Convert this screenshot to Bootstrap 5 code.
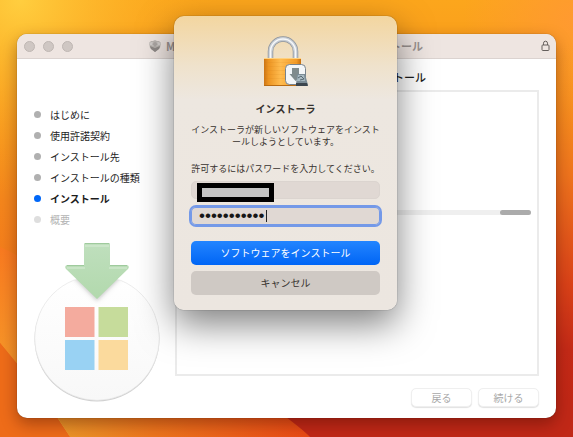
<!DOCTYPE html>
<html lang="ja">
<head>
<meta charset="utf-8">
<meta name="viewport" content="width=device-width, initial-scale=1">
<title>インストーラ</title>
<link href="https://cdn.jsdelivr.net/npm/bootstrap@5.3.0/dist/css/bootstrap.min.css" rel="stylesheet">
<style>
body{font-family:"Noto Sans CJK JP",sans-serif;font-size:10px;line-height:12px;color:#1c1c1c;background:#f5801a}
.desktop{padding:34px 17px 19px}
.installer{border-radius:10px;box-shadow:0 0 1px rgba(0,0,0,.5),0 6px 16px rgba(60,10,0,.4)}
.titlebar{height:25px;padding:0 6px 0 7px;background:#eee5e1;border-bottom:1px solid #dbd3d0;border-radius:10px 10px 0 0;color:#9a9290;font-size:11px}
.light{width:11px;height:11px;border-radius:50%;background:#cfc7c3;border:1px solid #bfb7b3}
.caption-row{margin-left:75px;margin-right:118px}
.sidebar{width:158px;padding:45px 0 15px 17px}
.steps li{height:21px;gap:9px}
.dot{width:7px;height:7px;border-radius:50%;background:#b0b0b0}
.current{font-weight:700}
.current .dot{background:#0067f8}
.pending{color:#b4b4b4}
.pending .dot{background:#dedede}
.emblem{width:128px}
.content-pane{padding:11px 17px 11px 0}
.pane-title{font-size:11px;line-height:14px;padding-right:113px;margin-bottom:6px}
.log-panel{border:2px solid #ebebeb;padding:0 6px 0 0}
.progress-line{height:5px;margin-top:118px;background:#efefef;border-radius:3px}
.progress-line .progress-bar{width:31px;background:#ababab;border-radius:3px}
.nav-row{gap:6px}
.nav-btn{width:61px;height:19px;font-size:10px;line-height:12px;border-radius:5px;padding:0;background:#fff;color:#aaa;border:1px solid #ededed;box-shadow:0 1px 1px #e2e2e2}
.nav-btn:disabled{opacity:1;background:#fff;color:#a8a8a8;border-color:#efefef}
.auth-layer{padding:16px 2px 0 0}
.auth{width:223px;padding:20px 17px 15px;border-radius:10px;color:#37322e;background:linear-gradient(#f3d6a0,#efe2cc 50px,#ede7e0 84px,#ece6e0);box-shadow:0 0 1px rgba(0,0,0,.7),0 14px 36px rgba(0,0,0,.5)}
.auth h1{font-size:10px;line-height:12px;margin:14px 0 9px;font-weight:700}
.auth p,.auth label{font-size:9px;line-height:12px;white-space:nowrap}
.auth p{margin-bottom:15px}
.auth label{margin-bottom:6px}
.entry{height:18px;border-radius:5px;background:#e0d8d3;border:1px solid #dbd4cf;padding:0 8px}
.entry input{border:0;outline:0;background:none;padding:0;font:17px/18px "Liberation Sans",sans-serif;color:#171717;min-width:0}
.entry .secret{width:67px}
.focused{margin:8px 0 16px;border:0;box-shadow:0 0 0 2px #7499e8,inset 0 0 0 1px #7499e8}
.caret{width:1px;height:12px;background:#222}
.mask{left:5px;top:1px;width:77px;height:19px;border:5px solid #000;background:#c4c4c4}
.act{height:24px;border:0;border-radius:5px;font-size:10px;line-height:12px;padding:0}
.act-main{background:linear-gradient(#2385ff,#0065f5);color:#fff;margin-bottom:6px}
.act-cancel{background:#cfc9c4;color:#37322e}
</style>
<script src="https://cdn.jsdelivr.net/npm/bootstrap@5.3.0/dist/js/bootstrap.bundle.min.js"></script>
</head>
<body>
<div class="desktop position-relative min-vh-100 d-flex">
  <svg class="position-absolute top-0 start-0 w-100 h-100" viewBox="0 0 573 437" preserveAspectRatio="none" aria-hidden="true">
    <defs>
      <linearGradient id="base" x1="0" y1="0" x2="0" y2="1"><stop offset="0" stop-color="#fca61c"/><stop offset=".45" stop-color="#f4861c"/><stop offset="1" stop-color="#f0611a"/></linearGradient>
      <radialGradient id="sun" gradientUnits="userSpaceOnUse" cx="20" cy="0" r="200"><stop offset="0" stop-color="#ffce3f"/><stop offset="1" stop-color="#fca61c" stop-opacity="0"/></radialGradient>
      <radialGradient id="glow" gradientUnits="userSpaceOnUse" cx="573" cy="20" r="110"><stop offset="0" stop-color="#ff9a30"/><stop offset="1" stop-color="#ff9a30" stop-opacity="0"/></radialGradient>
      <linearGradient id="rightside" gradientUnits="userSpaceOnUse" x1="0" y1="0" x2="0" y2="437"><stop offset=".1" stop-color="#fb9420" stop-opacity="0"/><stop offset=".4" stop-color="#ef741d"/><stop offset=".65" stop-color="#da4218"/><stop offset=".8" stop-color="#c42a17"/><stop offset="1" stop-color="#c02514"/></linearGradient>
      <linearGradient id="band" x1="0" y1="0" x2="0" y2="1"><stop offset="0" stop-color="#f97a20"/><stop offset="1" stop-color="#f4a82e"/></linearGradient>
      <linearGradient id="foot" x1="0" y1="0" x2="1" y2="0"><stop offset="0" stop-color="#ec9a2a"/><stop offset=".4" stop-color="#ee761d"/><stop offset="1" stop-color="#ea4a15"/></linearGradient>
    </defs>
    <path fill="url(#base)" d="M0 0H573V437H0Z"/>
    <path fill="url(#sun)" d="M0 0H230V210H0Z"/>
    <path fill="url(#glow)" d="M460 0H573V130H460Z"/>
    <path fill="url(#rightside)" d="M500 0H573V437H500Z"/>
    <path fill="url(#band)" d="M0 247Q40 263 90 320V437H70Q38 388 0 343Z"/>
    <path fill="#ee6c19" d="M0 343Q38 388 70 437H0Z"/>
    <path fill="url(#foot)" d="M50 405H275L310 437H70Z"/>
    <path fill="#c12817" d="M262 400H573V437H310Q297 424 262 400Z"/>
  </svg>

  <main class="installer position-relative d-flex flex-column flex-grow-1 bg-white">
    <header class="titlebar d-flex align-items-center fw-bold">
      <span class="d-flex gap-1"><i class="light"></i><i class="light ms-1 me-1"></i><i class="light"></i></span>
      <div class="caption-row d-flex align-items-center flex-grow-1">
        <svg width="14" height="14" viewBox="0 0 14 14" aria-hidden="true"><path fill="#b9b4b0" d="M1 4 3 2 5 2 7 1 9 2 11 2 13 4 12 9 7 13 2 9Z"/><path fill="#d1cdca" d="M1 4 4 3 7 5 10 3 13 4 12 6 7 7 2 6Z"/><path fill="#8f8a87" d="M2 7 7 9 12 7 11 10 7 13 3 10Z"/><path fill="#aaa5a2" d="M4 5 7 3 10 5 7 8Z"/></svg>
        <span class="ms-1">M</span><span class="ms-auto">トール</span>
      </div>
      <svg width="9" height="12" viewBox="0 0 9 12" fill="none" stroke="#655f5c" aria-hidden="true"><rect x="1" y="5" width="7" height="5.5" rx=".8"/><path d="M2.5 5V3.2a2 2 0 0 1 4 0V5"/></svg>
    </header>
    <div class="d-flex flex-grow-1">
      <aside class="sidebar d-flex flex-column justify-content-between flex-shrink-0">
        <ol class="steps list-unstyled mb-0">
          <li class="d-flex align-items-center"><i class="dot"></i>はじめに</li>
          <li class="d-flex align-items-center"><i class="dot"></i>使用許諾契約</li>
          <li class="d-flex align-items-center"><i class="dot"></i>インストール先</li>
          <li class="d-flex align-items-center"><i class="dot"></i>インストールの種類</li>
          <li class="current d-flex align-items-center"><i class="dot"></i>インストール</li>
          <li class="pending d-flex align-items-center"><i class="dot"></i>概要</li>
        </ol>
        <svg class="emblem" viewBox="0 0 128 161" aria-hidden="true">
          <defs>
            <linearGradient id="disc" x1="0" y1="0" x2="0" y2="1"><stop offset="0" stop-color="#fff"/><stop offset="1" stop-color="#f8f8f8"/></linearGradient>
            <linearGradient id="arrow" x1="0" y1="0" x2="0" y2="1"><stop offset="0" stop-color="#bfdfbd"/><stop offset="1" stop-color="#b2d9ad"/></linearGradient>
            <filter id="soft" x="-20%" y="-20%" width="140%" height="140%"><feGaussianBlur stdDeviation="2"/></filter>
            <clipPath id="inside"><circle cx="63" cy="96" r="62"/></clipPath>
          </defs>
          <circle cx="63" cy="97" r="62.5" fill="#d0d0d0"/>
          <circle cx="63" cy="96" r="62.3" fill="url(#disc)" stroke="#e5e5e5" stroke-width=".7"/>
          <path clip-path="url(#inside)" filter="url(#soft)" fill="#c9c9c9" d="M32 28H94L63 59Z"/>
          <path fill="url(#arrow)" d="M51 1H75Q76 1 76 2V23H93Q96 24 94 27L63 57 32 27Q30 24 33 23H50V2Q50 1 51 1Z"/>
          <path fill="none" stroke="#9fca9d" d="M51 1.5H75M33 23.5H50M76 23.5H93"/>
          <path fill="none" stroke="#d8ecd6" d="M51 4H75M33 26H51M75 26H93"/>
          <path fill="#f4ab9e" d="M31 65H60.500V95H31Z"/><path fill="#c6dc9b" d="M64.500 65H94V95H64.500Z"/>
          <path fill="#99d2f3" d="M31 98H60.500V128H31Z"/><path fill="#fbda9d" d="M64.500 98H94V128H64.500Z"/>
        </svg>
      </aside>
      <section class="content-pane d-flex flex-column flex-grow-1">
        <h2 class="pane-title text-end">トール</h2>
        <div class="log-panel flex-grow-1">
          <div class="progress-line d-flex justify-content-end" role="progressbar" aria-label="インストール"><div class="progress-bar"></div></div>
        </div>
        <div class="nav-row d-flex justify-content-end mt-2 pt-1">
          <button class="btn nav-btn" type="button" disabled>戻る</button>
          <button class="btn nav-btn" type="button" disabled>続ける</button>
        </div>
      </section>
    </div>
  </main>

  <div class="auth-layer position-absolute top-0 start-0 w-100 d-flex justify-content-center">
    <form class="auth d-flex flex-column text-center" role="dialog" aria-labelledby="auth-title">
      <svg class="mx-auto" width="52" height="53" viewBox="0 0 52 53" aria-hidden="true">
        <defs>
          <linearGradient id="brass" x1="0" y1="0" x2="1" y2="0"><stop offset="0" stop-color="#cc7413"/><stop offset=".12" stop-color="#ec9421"/><stop offset=".45" stop-color="#ffbc50"/><stop offset=".88" stop-color="#f39b27"/><stop offset="1" stop-color="#c8700f"/></linearGradient>
        </defs>
        <path fill="none" stroke="#8d939b" stroke-width="5.500" d="M10.500 23V15.500a12.500 12.500 0 0 1 25 0V23"/>
        <path fill="none" stroke="#c6ccd3" stroke-width="4" d="M10.500 23V15.500a12.500 12.500 0 0 1 25 0V23"/>
        <path fill="none" stroke="#f6f8fa" stroke-width="1.500" d="M10.500 23V15.500a12.500 12.500 0 0 1 25 0V23"/>
        <rect x="4" y="22" width="37" height="28" rx="1" fill="url(#brass)"/>
        <path fill="none" stroke="#d17c18" stroke-opacity=".12" d="M4 26.500H41M4 30.500H41M4 34.500H41M4 38.500H41M4 42.500H41"/>
        <path stroke="#ffd17e" d="M4 22.500H41"/><path stroke="#b96b12" d="M4 49.500H41"/>
        <rect x="25.500" y="28.500" width="20" height="20" rx="4" fill="#f3f6f8" stroke="#78838c"/>
        <path fill="#7f8b8d" d="M32 32H39V38H42.500L35.500 45 29.500 38H32Z"/>
        <path fill="#7b8c96" d="M37 38H45L48 49H36Z"/><path fill="#a8bac2" d="M38 39H44L45 45H37Z"/><path fill="#3c464e" d="M36 47H47L48 50H36Z"/>
        <path fill="none" stroke="#566771" d="M38 42 41 40 44 43 40 44"/>
      </svg>
      <h1 id="auth-title">インストーラ</h1>
      <p>インストーラが新しいソフトウェアをインスト<br>ールしようとしています。</p>
      <label for="password">許可するにはパスワードを入力してください。</label>
      <div class="entry position-relative d-flex">
        <input class="w-100" type="text" aria-label="ユーザ名">
        <span class="mask position-absolute"></span>
      </div>
      <div class="entry focused d-flex align-items-center">
        <input class="secret" id="password" type="password" value="abcdefghijk">
        <span class="caret"></span>
      </div>
      <button class="btn act act-main" type="submit">ソフトウェアをインストール</button>
      <button class="btn act act-cancel" type="button">キャンセル</button>
    </form>
  </div>
</div>
</body>
</html>
